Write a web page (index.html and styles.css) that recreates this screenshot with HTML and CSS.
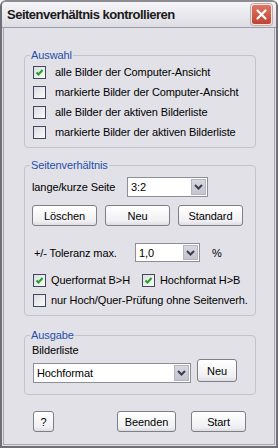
FILE: index.html
```html
<!DOCTYPE html>
<html lang="de">
<head>
  <meta charset="UTF-8">
  <title>Seitenverhältnis kontrollieren</title>
  <link rel="stylesheet" href="styles.css">
</head>
<body>

  <div class="window">
    <div class="titlebar">
      <span class="title">Seitenverhältnis kontrollieren</span>
      <button class="close">
        <svg width="13" height="13" viewBox="0 0 13 13"><path d="M2.5 2.5L10.5 10.5M10.5 2.5L2.5 10.5" stroke="#fff" stroke-width="2.2" stroke-linecap="round"/></svg>
      </button>
    </div>

    <div class="client">

      <!-- Auswahl -->
      <fieldset class="group g1">
        <legend>Auswahl</legend>
        <div class="check wide"><span class="box"><svg width="11" height="11" viewBox="0 0 11 11"><path d="M2.5 5.5L4.5 7.5L8.5 3" fill="none" stroke="#21a121" stroke-width="2"/></svg></span>alle Bilder der Computer-Ansicht</div>
        <div class="check wide"><span class="box"></span>markierte Bilder der Computer-Ansicht</div>
        <div class="check wide"><span class="box"></span>alle Bilder der aktiven Bilderliste</div>
        <div class="check wide"><span class="box"></span>markierte Bilder der aktiven Bilderliste</div>
      </fieldset>

      <!-- Seitenverhältnis -->
      <fieldset class="group g2">
        <legend>Seitenverhältnis</legend>
        <div class="row r-seite">
          <span class="lbl">lange/kurze Seite</span>
          <div class="combo c-seite">
            <span class="value">3:2</span>
            <span class="arrow"><svg width="9" height="6" viewBox="0 0 9 6"><path d="M1 1L4.5 4.5L8 1" fill="none" stroke="#3c3c4c" stroke-width="2"/></svg></span>
          </div>
        </div>
        <div class="row r-buttons">
          <button class="btn">Löschen</button>
          <button class="btn">Neu</button>
          <button class="btn">Standard</button>
        </div>
        <div class="row r-tol">
          <span class="lbl">+/- Toleranz max.</span>
          <div class="combo c-tol">
            <span class="value">1,0</span>
            <span class="arrow"><svg width="9" height="6" viewBox="0 0 9 6"><path d="M1 1L4.5 4.5L8 1" fill="none" stroke="#3c3c4c" stroke-width="2"/></svg></span>
          </div>
          <span class="pct">%</span>
        </div>
        <div class="row r-format">
          <div class="check quer"><span class="box"><svg width="11" height="11" viewBox="0 0 11 11"><path d="M2.5 5.5L4.5 7.5L8.5 3" fill="none" stroke="#21a121" stroke-width="2"/></svg></span>Querformat B&gt;H</div>
          <div class="check"><span class="box"><svg width="11" height="11" viewBox="0 0 11 11"><path d="M2.5 5.5L4.5 7.5L8.5 3" fill="none" stroke="#21a121" stroke-width="2"/></svg></span>Hochformat H&gt;B</div>
        </div>
        <div class="check"><span class="box"></span>nur Hoch/Quer-Prüfung ohne Seitenverh.</div>
      </fieldset>

      <!-- Ausgabe -->
      <fieldset class="group g3">
        <legend>Ausgabe</legend>
        <div class="r-liste">Bilderliste</div>
        <div class="row r-ausgabe">
          <div class="combo c-liste">
            <span class="value">Hochformat</span>
            <span class="arrow"><svg width="9" height="6" viewBox="0 0 9 6"><path d="M1 1L4.5 4.5L8 1" fill="none" stroke="#3c3c4c" stroke-width="2"/></svg></span>
          </div>
          <button class="btn b-neu">Neu</button>
        </div>
      </fieldset>

      <div class="footer">
        <button class="btn b-help">?</button>
        <button class="btn b-end">Beenden</button>
        <button class="btn b-start">Start</button>
      </div>

    </div>
  </div>

</body>
</html>
```

FILE: styles.css
```css
body {
  margin: 0;
  background: #fff;
  font-family: 'Liberation Sans', Arial, sans-serif;
  font-size: 11px;
  letter-spacing: -0.1px;
  color: #000;
}

.window {
  width: 278px;
  height: 448px;
  box-sizing: border-box;
  border: 2px solid #6f6f75;
  border-top-color: #8c8c92;
  border-radius: 6px 6px 0 0;
  background: #e2e1e7;
  display: flex;
  flex-direction: column;
}

.titlebar {
  height: 26px;
  box-sizing: border-box;
  flex-shrink: 0;
  display: flex;
  align-items: center;
  justify-content: space-between;
  padding: 0 4px 0 5px;
  background: linear-gradient(#f6f6f9, #dcdce3);
  border-bottom: 1px solid #9c9ca4;
  border-radius: 4px 4px 0 0;
}

.title {
  font-weight: bold;
  font-size: 13px;
  letter-spacing: -0.5px;
  color: #1a1a1a;
}

.close {
  width: 21px;
  height: 21px;
  padding: 0;
  display: flex;
  align-items: center;
  justify-content: center;
  background: linear-gradient(#de7565, #bf4433);
  border: 1px solid #f1e6e6;
  border-radius: 3px;
  box-shadow: 0 0 0 1px #c9a9a6;
}

.client {
  flex: 1;
  margin: 0 1px 1px;
  border: 1px solid #a6a6ae;
  border-top: none;
  padding: 20px 18px 0 20px;
}

.group {
  margin: 0;
  padding: 0 6px 5px 7px;
  border: 1px solid #c3c3cb;
  border-radius: 4px;
  min-width: 0;
}

.group legend {
  padding: 0 1px;
  margin-left: -2px;
  color: #1f4fa8;
  line-height: 14px;
}

.g2 { margin-top: 10px; }
.g3 { margin-top: 12px; padding-bottom: 11px; }

.check {
  height: 20px;
  display: flex;
  align-items: center;
  gap: 5px;
  white-space: nowrap;
}

.check.wide { gap: 9px; }
.quer { width: 109px; }

.box {
  width: 11px;
  height: 11px;
  margin-left: 1px;
  border: 1px solid #3e4a5c;
  background: linear-gradient(135deg, #dcdce2, #fbfbfb);
  display: flex;
  align-items: center;
  justify-content: center;
  flex-shrink: 0;
}

.row {
  display: flex;
  align-items: center;
}

.lbl { white-space: nowrap; }

.r-seite { margin-top: 5px; height: 20px; }
.r-seite .lbl { width: 95px; }

.r-buttons { margin-top: 8px; gap: 8px; }
.r-buttons .btn { width: 65px; }

.r-tol { margin-top: 17px; height: 19px; }
.r-tol .lbl { width: 101px; margin-left: 2px; }
.pct { margin-left: 12px; }

.r-format { margin-top: 8px; }

.combo {
  box-sizing: border-box;
  display: flex;
  align-items: center;
  justify-content: space-between;
  background: #fff;
  border: 1px solid #8e8e98;
  padding: 1px;
}

.combo .value { padding-left: 2px; }

.arrow {
  width: 15px;
  align-self: stretch;
  display: flex;
  align-items: center;
  justify-content: center;
  background: linear-gradient(#d8d8e2, #c4c4d0);
  border: 1px solid #b4b4c0;
  box-sizing: border-box;
}

.c-seite { width: 81px; height: 20px; }
.c-tol { width: 65px; height: 19px; }
.c-liste { width: 158px; height: 20px; margin: 4px 0 0 1px; }

.btn {
  height: 21px;
  padding: 0;
  font-family: inherit;
  font-size: 11px;
  letter-spacing: inherit;
  color: #000;
  background: linear-gradient(#ffffff, #f0f0f3 80%, #dcdce2);
  border: 1px solid #7e7e86;
  border-radius: 3px;
}

.r-liste { height: 16px; line-height: 16px; }
.r-ausgabe { margin-top: 1px; align-items: flex-start; gap: 6px; }
.b-neu { width: 40px; height: 23px; }

.footer {
  margin-top: 16px;
  display: flex;
}

.b-help { width: 21px; margin-left: 9px; }
.b-end { width: 59px; margin-left: 63px; }
.b-start { width: 55px; margin-left: 15px; }
```
